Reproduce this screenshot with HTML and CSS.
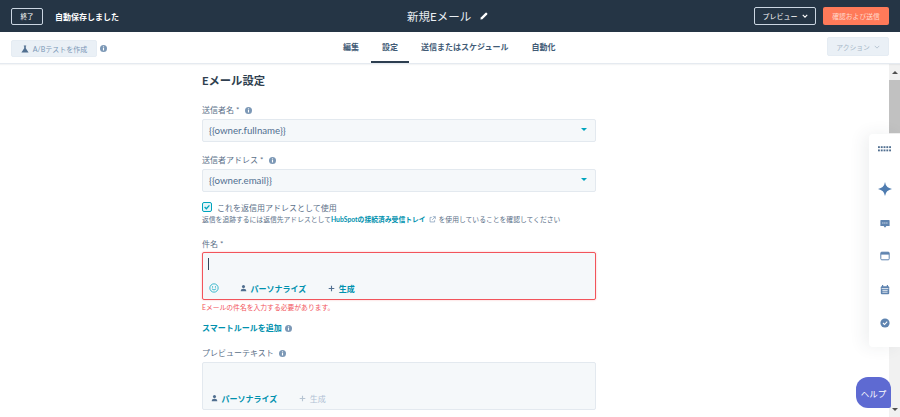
FILE: index.html
```html
<!DOCTYPE html>
<html lang="ja">
<head>
<meta charset="utf-8">
<title>新規Eメール</title>
<link rel="stylesheet" href="styles.css">
</head>
<body>
<div class="app">
  <header class="topbar">
    <div class="top-left">
      <button class="btn-outline btn-exit">終了</button>
      <span class="saved">自動保存しました</span>
    </div>
    <div class="top-title">
      <span>新規Eメール</span>
      <svg class="pencil" viewBox="0 0 10 10" width="8" height="8"><path d="M0.5 9.5 L1 7 L7 1 Q7.8 .4 8.6 1.2 L8.9 1.5 Q9.6 2.3 9 3 L3 9 Z" fill="#fff"/></svg>
    </div>
    <div class="top-right">
      <button class="btn-outline btn-preview">プレビュー
        <svg viewBox="0 0 8 5" width="6" height="4"><path d="M1 1 L4 4 L7 1" fill="none" stroke="#fff" stroke-width="1.5"/></svg>
      </button>
      <button class="btn-send">確認および送信</button>
    </div>
  </header>
  <nav class="subbar">
    <div class="sub-left">
      <button class="btn-ab">
        <svg viewBox="0 0 10 10" width="8" height="8"><path d="M3.5 0.5 H6.5 V1.5 H6 V4 L9.5 9.5 H0.5 L4 4 V1.5 H3.5 Z" fill="#516f90"/></svg>
        A/Bテストを作成
      </button>
      <svg class="info" viewBox="0 0 10 10" width="7" height="7"><circle cx="5" cy="5" r="5" fill="#7c98b6"/><rect x="4.2" y="4.2" width="1.6" height="3.6" fill="#fff"/><rect x="4.2" y="2" width="1.6" height="1.4" fill="#fff"/></svg>
    </div>
    <ul class="tabs">
      <li class="tab">編集</li>
      <li class="tab tab-active">設定</li>
      <li class="tab">送信またはスケジュール</li>
      <li class="tab">自動化</li>
    </ul>
    <button class="btn-action">アクション
      <svg viewBox="0 0 8 5" width="6" height="4"><path d="M1 1 L4 4 L7 1" fill="none" stroke="#a8b8c8" stroke-width="1"/></svg>
    </button>
  </nav>
  <div class="body-row">
    <main class="content">
      <form class="form">
        <h2 class="heading">Eメール設定</h2>
        <div class="label label-first">送信者名 *
          <svg class="info" viewBox="0 0 10 10" width="7" height="7"><circle cx="5" cy="5" r="5" fill="#7c98b6"/><rect x="4.2" y="4.2" width="1.6" height="3.6" fill="#fff"/><rect x="4.2" y="2" width="1.6" height="1.4" fill="#fff"/></svg>
        </div>
        <div class="select"><span>{{owner.fullname}}</span><i class="caret"></i></div>
        <div class="label label-second">送信者アドレス *
          <svg class="info" viewBox="0 0 10 10" width="7" height="7"><circle cx="5" cy="5" r="5" fill="#7c98b6"/><rect x="4.2" y="4.2" width="1.6" height="3.6" fill="#fff"/><rect x="4.2" y="2" width="1.6" height="1.4" fill="#fff"/></svg>
        </div>
        <div class="select"><span>{{owner.email}}</span><i class="caret"></i></div>
        <div class="check-row">
          <span class="checkbox"><svg viewBox="0 0 10 10" width="8" height="8"><path d="M2 5 L4.2 7.2 L8 3" fill="none" stroke="#00a4bd" stroke-width="1.6"/></svg></span>
          <span>これを返信用アドレスとして使用</span>
        </div>
        <p class="hint"><span>返信を追跡するには返信先アドレスとして</span><a class="hint-link">HubSpotの接続済み受信トレイ</a><svg class="ext" viewBox="0 0 10 10" width="7" height="7"><path d="M4 2 H1.5 V8.5 H8 V6 M5.5 1 H9 V4.5 M9 1 L4.5 5.5" fill="none" stroke="#7c98b6" stroke-width="1"/></svg><span>を使用していることを確認してください</span></p>
        <div class="label label-subject">件名 *</div>
        <div class="editor editor-error">
          <div class="editor-text"><i class="cursor"></i></div>
          <div class="editor-tools">
            <svg class="smile" viewBox="0 0 12 12" width="10" height="10"><circle cx="6" cy="6" r="5" fill="none" stroke="#00a4bd" stroke-width=".9"/><path d="M3.5 7 Q6 9.8 8.5 7" fill="none" stroke="#00a4bd" stroke-width=".9"/><circle cx="4.3" cy="4.7" r=".7" fill="#00a4bd"/><circle cx="7.7" cy="4.7" r=".7" fill="#00a4bd"/></svg>
            <span class="tool tool-person">
              <svg viewBox="0 0 10 10" width="7" height="8"><circle cx="5" cy="3" r="2.2" fill="#516f90"/><path d="M1 9.5 Q1 6 5 6 Q9 6 9 9.5 Z" fill="#516f90"/></svg>
              パーソナライズ
            </span>
            <span class="tool">
              <svg viewBox="0 0 10 10" width="7" height="7"><path d="M5 1 V9 M1 5 H9" stroke="#516f90" stroke-width="1.6"/></svg>
              生成
            </span>
          </div>
        </div>
        <p class="error">Eメールの件名を入力する必要があります。</p>
        <div class="smart">スマートルールを追加
          <svg class="info" viewBox="0 0 10 10" width="7" height="7"><circle cx="5" cy="5" r="5" fill="#7c98b6"/><rect x="4.2" y="4.2" width="1.6" height="3.6" fill="#fff"/><rect x="4.2" y="2" width="1.6" height="1.4" fill="#fff"/></svg>
        </div>
        <div class="label label-preview">プレビューテキスト
          <svg class="info" viewBox="0 0 10 10" width="7" height="7"><circle cx="5" cy="5" r="5" fill="#7c98b6"/><rect x="4.2" y="4.2" width="1.6" height="3.6" fill="#fff"/><rect x="4.2" y="2" width="1.6" height="1.4" fill="#fff"/></svg>
        </div>
        <div class="editor editor-preview">
          <div class="editor-tools">
            <span class="tool">
              <svg viewBox="0 0 10 10" width="7" height="8"><circle cx="5" cy="3" r="2.2" fill="#516f90"/><path d="M1 9.5 Q1 6 5 6 Q9 6 9 9.5 Z" fill="#516f90"/></svg>
              パーソナライズ
            </span>
            <span class="tool tool-disabled">
              <svg viewBox="0 0 10 10" width="7" height="7"><path d="M5 1 V9 M1 5 H9" stroke="#b6c4d2" stroke-width="1.6"/></svg>
              生成
            </span>
          </div>
        </div>
      </form>
    </main>
    <div class="scrollbar">
      <div class="scroll-arrow"><i class="arrow-up"></i></div>
      <div class="scroll-thumb"></div>
      <div class="scroll-rest"></div>
      <div class="scroll-arrow"><i class="arrow-down"></i></div>
    </div>
  </div>
</div>
<aside class="sidepanel">
  <svg viewBox="0 0 14 6" width="13" height="6"><g fill="#516f90"><rect x="0" y="0" width="2" height="2"/><rect x="3" y="0" width="2" height="2"/><rect x="6" y="0" width="2" height="2"/><rect x="9" y="0" width="2" height="2"/><rect x="12" y="0" width="2" height="2"/><rect x="0" y="3.5" width="2" height="2"/><rect x="3" y="3.5" width="2" height="2"/><rect x="6" y="3.5" width="2" height="2"/><rect x="9" y="3.5" width="2" height="2"/><rect x="12" y="3.5" width="2" height="2"/></g></svg>
  <svg viewBox="0 0 14 14" width="14" height="14"><path d="M7 0 Q7.8 5.8 14 7 Q7.8 8.2 7 14 Q6.2 8.2 0 7 Q6.2 5.8 7 0 Z" fill="#4f7cb0"/></svg>
  <svg viewBox="0 0 10 10" width="10" height="10"><path d="M1 1 H9 Q9.6 1 9.6 1.6 V7 H6.4 L5 8.8 L3.6 7 H.4 V1.6 Q.4 1 1 1 Z" fill="#5f84b0"/><path d="M2.4 4 H7.6" stroke="#fff" stroke-width="1" stroke-dasharray="1 1"/></svg>
  <svg viewBox="0 0 10 10" width="10" height="10"><rect x=".8" y="1.2" width="8.4" height="7.6" rx="1" fill="#fff" stroke="#5f84b0" stroke-width="1"/><rect x=".8" y="1.2" width="8.4" height="2.4" fill="#5f84b0"/></svg>
  <svg viewBox="0 0 10 10" width="10" height="10"><rect x=".8" y="1.2" width="8.4" height="8" rx="1" fill="#5f84b0"/><rect x="2" y="0" width="1.2" height="2" fill="#5f84b0"/><rect x="6.8" y="0" width="1.2" height="2" fill="#5f84b0"/><path d="M1.6 3.6 H8.4 M2.4 5.4 H7.6 M2.4 7.2 H7.6" stroke="#fff" stroke-width=".8"/></svg>
  <svg viewBox="0 0 10 10" width="10" height="10"><circle cx="5" cy="5" r="4.6" fill="#5f84b0"/><path d="M3 5 L4.5 6.5 L7.2 3.6" fill="none" stroke="#fff" stroke-width="1.1"/></svg>
</aside>
<button class="help">ヘルプ</button>
</body>
</html>
```

FILE: styles.css
```css
* { box-sizing: border-box; }
html, body { margin: 0; height: 100%; overflow: hidden; background: #fff; }
body { font-family: "Lato", "Noto Sans CJK JP", sans-serif; color: #33475b; font-size: 8px; }
button { font-family: inherit; cursor: pointer; }
.app { display: flex; flex-direction: column; height: 417px; }

.topbar { flex: 0 0 32px; background: #253545; display: flex; align-items: center; justify-content: space-between; padding: 0 11px; position: relative; }
.top-left { display: flex; align-items: center; gap: 12px; }
.btn-outline { background: transparent; border: 1px solid #cbd6e2; color: #fff; border-radius: 2px; font-size: 6.5px; display: inline-flex; align-items: center; justify-content: center; padding: 0; }
.btn-exit { width: 32px; height: 17px; }
.saved { color: #fff; font-size: 8px; font-weight: 700; }
.top-title { position: absolute; left: 407px; top: 0; height: 32px; display: flex; align-items: center; gap: 9px; color: #e8edf2; font-size: 11.5px; }
.top-right { display: flex; align-items: center; gap: 7px; }
.btn-preview { width: 62px; height: 18px; gap: 4px; font-size: 7px; }
.btn-send { width: 66px; height: 18px; background: #ff7a59; border: 0; border-radius: 2px; color: #ffd9cc; font-size: 6.8px; padding: 0; }

.subbar { flex: 0 0 32px; background: #fff; border-bottom: 1px solid #e5eaf0; display: flex; align-items: flex-start; position: relative; padding: 0 11px; justify-content: space-between; box-shadow: 0 1px 1px rgba(45,62,80,.05); z-index: 1; }
.sub-left { display: flex; align-items: center; gap: 3px; margin-top: 8px; }
.btn-ab { width: 86px; height: 17px; background: #eaf0f6; border: 1px solid #e5ecf3; border-radius: 2px; color: #7c98b6; font-size: 7px; display: flex; align-items: center; justify-content: center; gap: 4px; padding: 0; }
.info { flex: none; }
.tabs { list-style: none; margin: 0; padding: 0; position: absolute; left: 332px; top: 0; height: 31px; display: flex; gap: 1px; }
.tab { height: 31px; padding: 0 11px; display: flex; align-items: center; font-size: 8px; font-weight: 700; color: #425b76; border-bottom: 2px solid transparent; }
.tab-active { border-bottom-color: #2d3e50; }
.btn-action { margin-top: 5px; width: 62px; height: 19px; background: #eaf0f6; border: 1px solid #e5ecf3; border-radius: 2px; color: #a8b8c8; font-size: 6.8px; display: flex; align-items: center; justify-content: center; gap: 4px; padding: 0; }

.body-row { flex: 1; display: flex; min-height: 0; }
.content { flex: 1; padding-left: 202px; overflow: hidden; }
.form { width: 394px; display: flex; flex-direction: column; }
.heading { margin: 9px 0 0; font-size: 11.3px; line-height: 16px; font-weight: 700; color: #2f3f50; }
.label { font-size: 8px; line-height: 12px; color: #5b7088; display: flex; align-items: center; gap: 5.5px; }
.label-first { margin-top: 15px; }
.label-second { margin-top: 12px; }
.label-subject { margin-top: 13px; margin-bottom: 2px; }
.label-preview { margin-top: 13px; margin-bottom: 3px; }
.select { height: 23px; margin-top: 3px; background: #f5f8fa; border: 1px solid #e3e9ef; border-radius: 2px; padding: 0 6px 2px; display: flex; align-items: center; justify-content: space-between; font-size: 9.7px; color: #516f90; }
.caret { width: 0; height: 0; border-left: 3.5px solid transparent; border-right: 3.5px solid transparent; border-top: 3.5px solid #00a4bd; margin-right: 2px; }
.check-row { display: flex; align-items: center; gap: 4px; margin-top: 10px; height: 10px; font-size: 8px; color: #5b7088; }
.checkbox { width: 10px; height: 10px; border: 1px solid #00a4bd; border-radius: 2px; background: #e5f5f8; display: flex; align-items: center; justify-content: center; margin-right: 1px; }
.hint { margin: 2px 0 0; font-size: 6.8px; line-height: 11px; color: #5b7088; display: flex; align-items: center; white-space: nowrap; }
.ext { margin: 0 3px; }
.hint-link { color: #0091ae; font-weight: 700; }
.editor { background: #f5f8fa; border: 1px solid #e3e9ef; border-radius: 2px; height: 48px; display: flex; flex-direction: column; justify-content: flex-end; }
.editor-error { border: 1.5px solid #f2545b; box-shadow: 0 0 2px rgba(242,84,91,.4); justify-content: space-between; }
.editor-text { padding: 4.5px 5px 0; height: 20px; }
.cursor { display: block; width: 1px; height: 12px; background: #33475b; }
.editor-tools { display: flex; align-items: center; height: 12px; margin-bottom: 5px; padding-left: 6px; }
.smile { margin-right: 21px; }
.tool { display: inline-flex; align-items: center; gap: 3.5px; font-size: 8px; font-weight: 700; color: #0091ae; margin-right: 22px; }
.tool-disabled { font-weight: 400; color: #b0c1d4; }
.error { margin: 2px 0 0; font-size: 6.8px; line-height: 11px; color: #f2545b; }
.smart { margin-top: 10px; font-size: 8px; line-height: 11px; font-weight: 700; color: #0091ae; display: flex; align-items: center; gap: 3px; }
.editor-preview .tool:first-child { margin-left: 2px; }

.scrollbar { flex: 0 0 11px; display: flex; flex-direction: column; background: #f1f1f1; }
.scroll-arrow { height: 16px; display: flex; align-items: center; justify-content: center; }
.scroll-thumb { height: 53px; background: #c1c1c1; }
.scroll-rest { flex: 1; }
.arrow-up { border-left: 3px solid transparent; border-right: 3px solid transparent; border-bottom: 3px solid #505050; }
.arrow-down { border-left: 3px solid transparent; border-right: 3px solid transparent; border-top: 3px solid #505050; }

.sidepanel { position: absolute; right: 0; top: 134px; width: 31px; height: 213px; background: #fff; border-radius: 4px 0 0 4px; box-shadow: -5px 0 16px rgba(45,62,80,.08); display: flex; flex-direction: column; align-items: center; padding: 12px 0 0 0; }
.sidepanel svg:nth-child(2) { margin-top: 30px; }
.sidepanel svg:nth-child(3) { margin-top: 23px; }
.sidepanel svg:nth-child(4) { margin-top: 22px; }
.sidepanel svg:nth-child(5) { margin-top: 24px; }
.sidepanel svg:nth-child(6) { margin-top: 23px; }
.help { position: absolute; left: 856px; top: 377px; width: 35px; height: 31px; background: #5e6ad2; border: 0; border-radius: 12px 12px 2px 12px; color: #fff; font-size: 8.5px; padding: 0; }
```
